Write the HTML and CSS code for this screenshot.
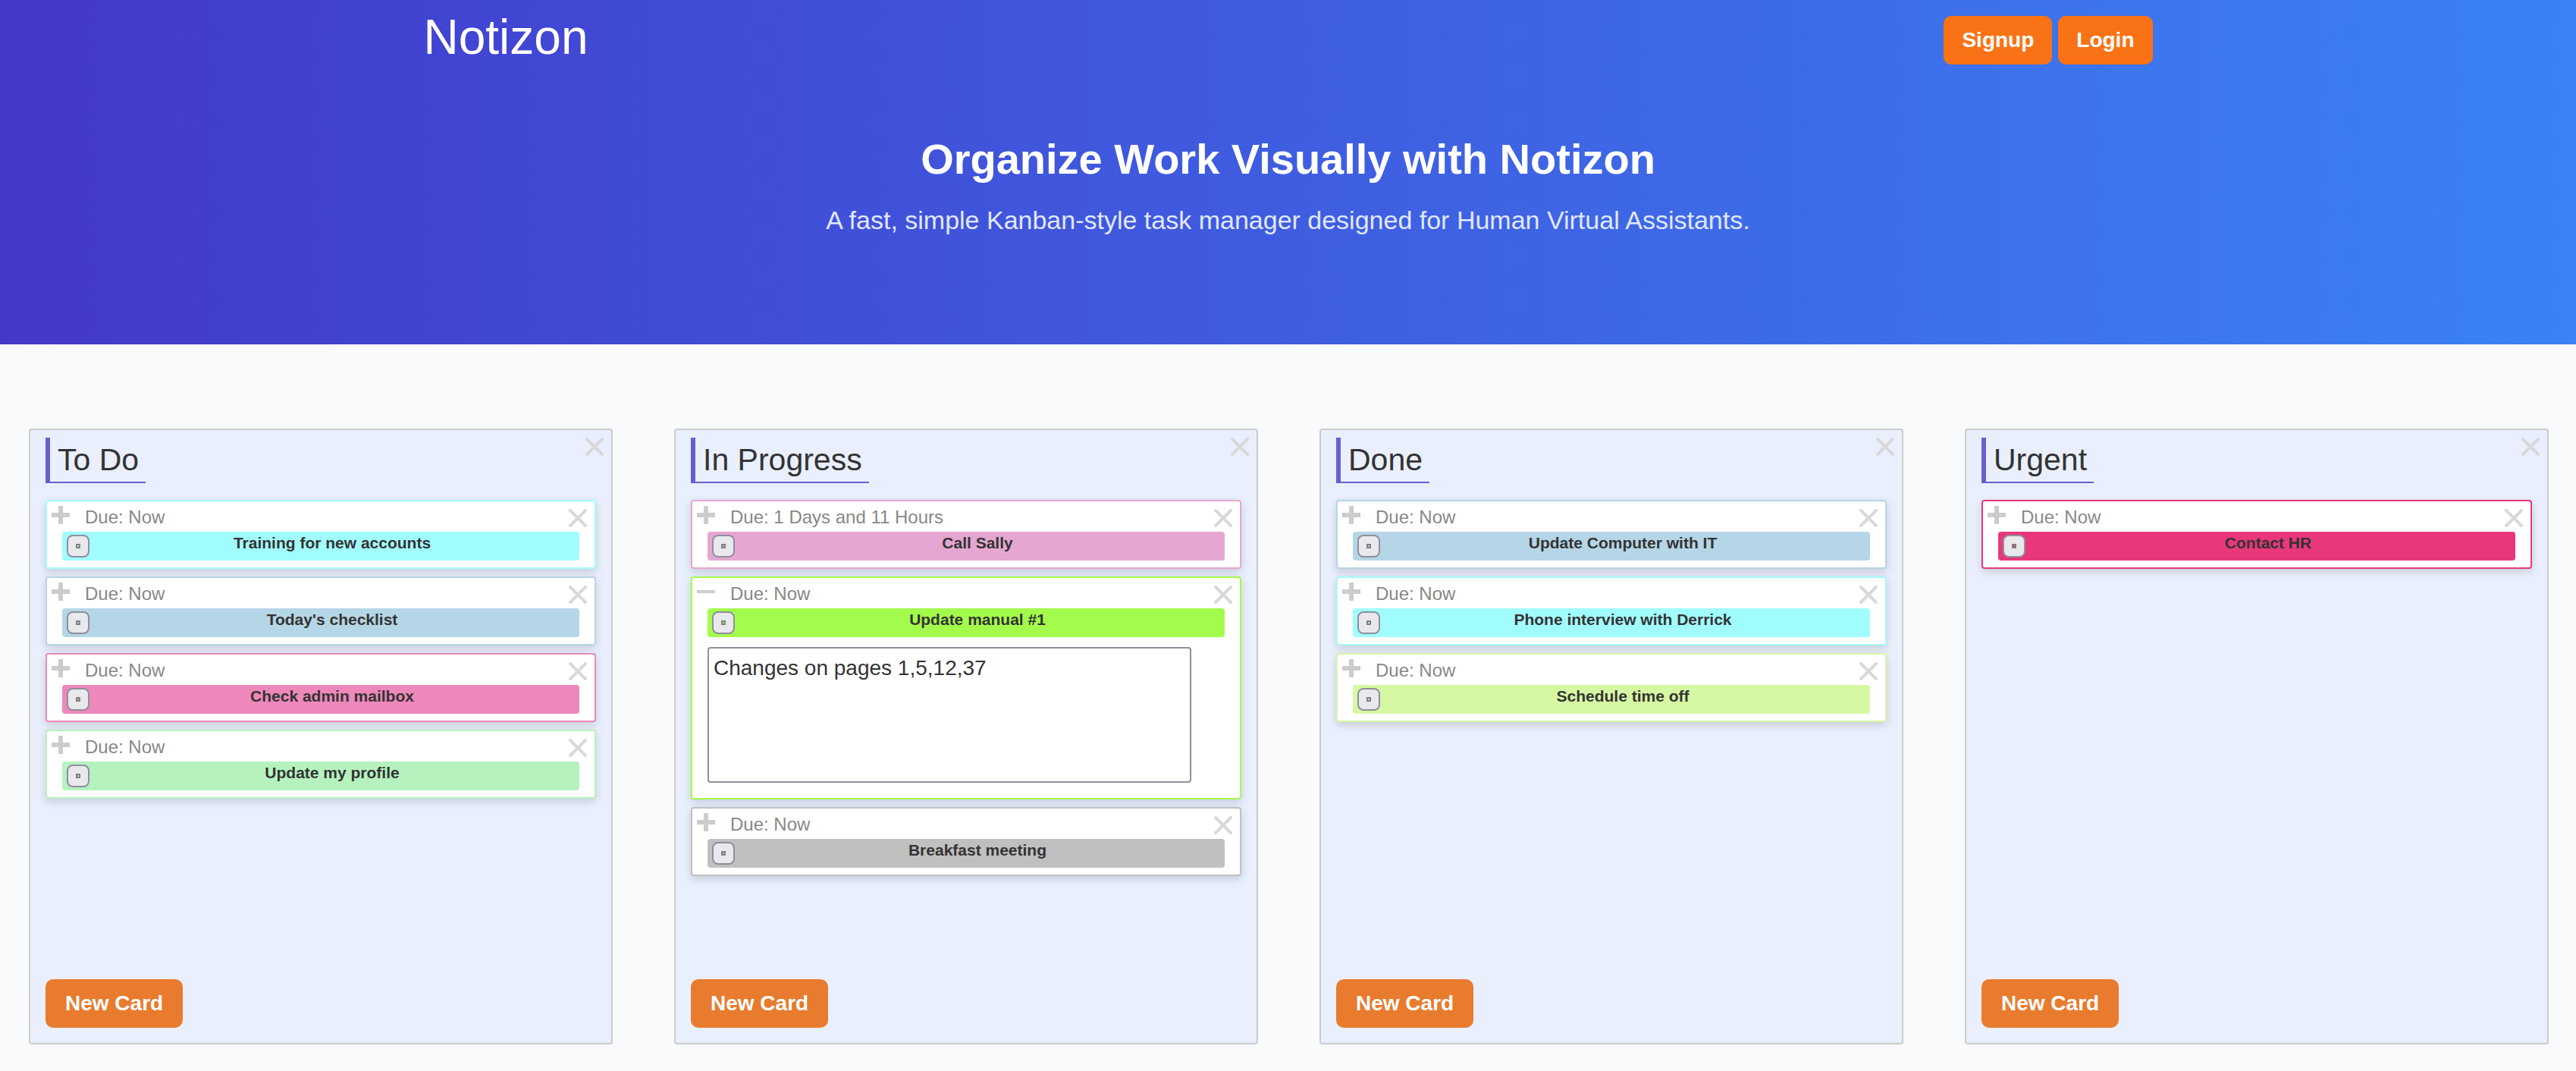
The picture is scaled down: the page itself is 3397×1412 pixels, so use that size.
FILE: index.html
```html
<!DOCTYPE html>
<html lang="en">
<head>
<meta charset="utf-8">
<meta name="viewport" content="width=device-width, initial-scale=1">
<title>Notizon</title>
<link rel="stylesheet" href="styles.css">
</head>
<body>
<!-- shared icons -->
<svg class="sprite" aria-hidden="true">
	<symbol id="plus" viewBox="0 0 24 24"><path d="M9 0h6v9h9v6h-9v9H9v-9H0V9h9z"/></symbol>
	<symbol id="minus" viewBox="0 0 24 24"><path d="M0 10h24v4H0z"/></symbol>
	<symbol id="cross" viewBox="0 0 24 24"><path d="M2 2l20 20M22 2L2 22" fill="none" stroke-width="4" stroke-linecap="round"/></symbol>
</svg>

<header class="header">
	<nav class="nav container">
		<a class="logo" href="#">Notizon</a>
		<div class="nav-links">
			<a class="btn" href="#signup">Signup</a>
			<a class="btn" href="#login">Login</a>
		</div>
	</nav>
	<div class="hero container">
		<h1>Organize Work Visually with Notizon</h1>
		<p>A fast, simple Kanban-style task manager designed for Human Virtual Assistants.</p>
	</div>
</header>

<main class="board">
	<section class="column">
		<div class="column-head">
			<h2>To Do</h2>
			<button class="icon close" aria-label="Delete list"><svg><use href="#cross"/></svg></button>
		</div>
		<div class="cards">
			<article class="card cyan">
				<div class="card-head">
					<button class="icon" aria-label="Expand"><svg><use href="#plus"/></svg></button>
					<span class="due">Due: Now</span>
					<button class="icon close" aria-label="Delete card"><svg><use href="#cross"/></svg></button>
				</div>
				<div class="card-bar">
					<button class="picker" aria-label="Color"></button>
					<h3>Training for new accounts</h3>
				</div>
			</article>
			<article class="card blue">
				<div class="card-head">
					<button class="icon" aria-label="Expand"><svg><use href="#plus"/></svg></button>
					<span class="due">Due: Now</span>
					<button class="icon close" aria-label="Delete card"><svg><use href="#cross"/></svg></button>
				</div>
				<div class="card-bar">
					<button class="picker" aria-label="Color"></button>
					<h3>Today's checklist</h3>
				</div>
			</article>
			<article class="card pink">
				<div class="card-head">
					<button class="icon" aria-label="Expand"><svg><use href="#plus"/></svg></button>
					<span class="due">Due: Now</span>
					<button class="icon close" aria-label="Delete card"><svg><use href="#cross"/></svg></button>
				</div>
				<div class="card-bar">
					<button class="picker" aria-label="Color"></button>
					<h3>Check admin mailbox</h3>
				</div>
			</article>
			<article class="card green">
				<div class="card-head">
					<button class="icon" aria-label="Expand"><svg><use href="#plus"/></svg></button>
					<span class="due">Due: Now</span>
					<button class="icon close" aria-label="Delete card"><svg><use href="#cross"/></svg></button>
				</div>
				<div class="card-bar">
					<button class="picker" aria-label="Color"></button>
					<h3>Update my profile</h3>
				</div>
			</article>
		</div>
		<button class="btn new-card">New Card</button>
	</section>

	<section class="column">
		<div class="column-head">
			<h2>In Progress</h2>
			<button class="icon close" aria-label="Delete list"><svg><use href="#cross"/></svg></button>
		</div>
		<div class="cards">
			<article class="card orchid">
				<div class="card-head">
					<button class="icon" aria-label="Expand"><svg><use href="#plus"/></svg></button>
					<span class="due">Due: 1 Days and 11 Hours</span>
					<button class="icon close" aria-label="Delete card"><svg><use href="#cross"/></svg></button>
				</div>
				<div class="card-bar">
					<button class="picker" aria-label="Color"></button>
					<h3>Call Sally</h3>
				</div>
			</article>
			<article class="card lime">
				<div class="card-head">
					<button class="icon" aria-label="Collapse"><svg><use href="#minus"/></svg></button>
					<span class="due">Due: Now</span>
					<button class="icon close" aria-label="Delete card"><svg><use href="#cross"/></svg></button>
				</div>
				<div class="card-bar">
					<button class="picker" aria-label="Color"></button>
					<h3>Update manual #1</h3>
				</div>
				<div class="card-body">
					<textarea aria-label="Description">Changes on pages 1,5,12,37</textarea>
				</div>
			</article>
			<article class="card gray">
				<div class="card-head">
					<button class="icon" aria-label="Expand"><svg><use href="#plus"/></svg></button>
					<span class="due">Due: Now</span>
					<button class="icon close" aria-label="Delete card"><svg><use href="#cross"/></svg></button>
				</div>
				<div class="card-bar">
					<button class="picker" aria-label="Color"></button>
					<h3>Breakfast meeting</h3>
				</div>
			</article>
		</div>
		<button class="btn new-card">New Card</button>
	</section>

	<section class="column">
		<div class="column-head">
			<h2>Done</h2>
			<button class="icon close" aria-label="Delete list"><svg><use href="#cross"/></svg></button>
		</div>
		<div class="cards">
			<article class="card blue">
				<div class="card-head">
					<button class="icon" aria-label="Expand"><svg><use href="#plus"/></svg></button>
					<span class="due">Due: Now</span>
					<button class="icon close" aria-label="Delete card"><svg><use href="#cross"/></svg></button>
				</div>
				<div class="card-bar">
					<button class="picker" aria-label="Color"></button>
					<h3>Update Computer with IT</h3>
				</div>
			</article>
			<article class="card cyan">
				<div class="card-head">
					<button class="icon" aria-label="Expand"><svg><use href="#plus"/></svg></button>
					<span class="due">Due: Now</span>
					<button class="icon close" aria-label="Delete card"><svg><use href="#cross"/></svg></button>
				</div>
				<div class="card-bar">
					<button class="picker" aria-label="Color"></button>
					<h3>Phone interview with Derrick</h3>
				</div>
			</article>
			<article class="card yellow">
				<div class="card-head">
					<button class="icon" aria-label="Expand"><svg><use href="#plus"/></svg></button>
					<span class="due">Due: Now</span>
					<button class="icon close" aria-label="Delete card"><svg><use href="#cross"/></svg></button>
				</div>
				<div class="card-bar">
					<button class="picker" aria-label="Color"></button>
					<h3>Schedule time off</h3>
				</div>
			</article>
		</div>
		<button class="btn new-card">New Card</button>
	</section>

	<section class="column">
		<div class="column-head">
			<h2>Urgent</h2>
			<button class="icon close" aria-label="Delete list"><svg><use href="#cross"/></svg></button>
		</div>
		<div class="cards">
			<article class="card red">
				<div class="card-head">
					<button class="icon" aria-label="Expand"><svg><use href="#plus"/></svg></button>
					<span class="due">Due: Now</span>
					<button class="icon close" aria-label="Delete card"><svg><use href="#cross"/></svg></button>
				</div>
				<div class="card-bar">
					<button class="picker" aria-label="Color"></button>
					<h3>Contact HR</h3>
				</div>
			</article>
		</div>
		<button class="btn new-card">New Card</button>
	</section>
</main>
</body>
</html>
```

FILE: styles.css
```css
*{margin:0;padding:0;box-sizing:border-box;}
body{background:#f9fafc;color:#333;font-family:Arial,"Liberation Sans",sans-serif;}
a{text-decoration:none;}
button{border:0;background:none;font-family:inherit;cursor:pointer;}
.sprite{display:none;}
.container{max-width:2280px;margin:0 auto;}

/* header */
.header{background:linear-gradient(to right,#4338ca,#3b82f6);color:#fff;}
.nav{display:flex;justify-content:space-between;align-items:flex-start;padding-top:21px;}
.logo{color:#fff;font-size:64px;line-height:56px;}
.nav-links{display:flex;gap:8px;}
.btn{display:block;padding:16px 24px;border-radius:10px;background:#f97316;color:#fff;font-size:28px;font-weight:bold;line-height:32px;}
.btn:hover{background:#ea580c;}
.hero{padding:90px 0 138px;text-align:center;}
.hero h1{font-size:56px;line-height:70px;}
.hero p{margin-top:19px;color:#e0e7ff;font-size:34px;line-height:52px;}

/* board */
.board{display:grid;grid-template-columns:repeat(4,1fr);gap:81px;padding:111px 36px 35px 38px;}
.column{display:flex;flex-direction:column;min-height:812px;border:2px solid #ccc;border-radius:4px;background:#e9effd;}
.column-head{display:flex;justify-content:space-between;align-items:flex-start;padding:10px 10px 0 20px;}
.column-head h2{padding:0 9px 0 10px;border-left:6px solid #6a5fca;border-bottom:2px solid #6a5fca;font-size:41px;font-weight:normal;line-height:58px;}
.icon{display:block;width:24px;height:24px;}
.icon svg{display:block;width:24px;height:24px;fill:#ccc;stroke:none;}
.close svg{stroke:#d9d9d9;}

.cards{display:flex;flex-direction:column;gap:10px;padding:22px 20px;}
.card{padding-bottom:9px;border:2px solid var(--color);border-radius:4px;background:#fff;box-shadow:0 4px 12px rgba(0,0,0,.15);}
.card-head{display:flex;align-items:flex-start;height:40px;padding:6px 10px 0 6px;}
.card-head .close{margin-top:4px;}
.due{flex:1;padding-left:20px;color:#888;font-size:24px;line-height:30px;}
.card-bar{display:flex;align-items:flex-start;height:38px;margin:0 20px;padding:4px 6px;border-radius:4px;background:var(--color);}
.card-bar h3{flex:1;text-align:center;font-size:21px;line-height:22px;}
.picker{display:flex;align-items:center;justify-content:center;width:30px;height:30px;border:2px solid #8f8f9d;border-radius:8px;background:#e9e9ed;}
.picker::before{content:"";box-sizing:border-box;width:6px;height:6px;border:2px solid #808080;background:var(--color);}
.card-body{padding:13px 64px 11px 20px;}
.card-body textarea{display:block;width:100%;height:179px;padding:8px 6px;border:2px solid #8f8f9d;border-radius:4px;background:#fff;color:#333;font-family:inherit;font-size:28px;line-height:36px;resize:none;}
.new-card{align-self:flex-start;margin:auto 20px 20px;padding:16px 26px;background:#e87b2e;}

/* card colors */
.cyan{--color:#a1fdfd;}
.blue{--color:#b5d6e6;}
.pink{--color:#ee88bb;}
.green{--color:#b5f2be;}
.orchid{--color:#e5a7d1;}
.lime{--color:#a3fc4b;}
.gray{--color:#c0c0c0;}
.yellow{--color:#d6f8a3;}
.red{--color:#e9377c;}
```
